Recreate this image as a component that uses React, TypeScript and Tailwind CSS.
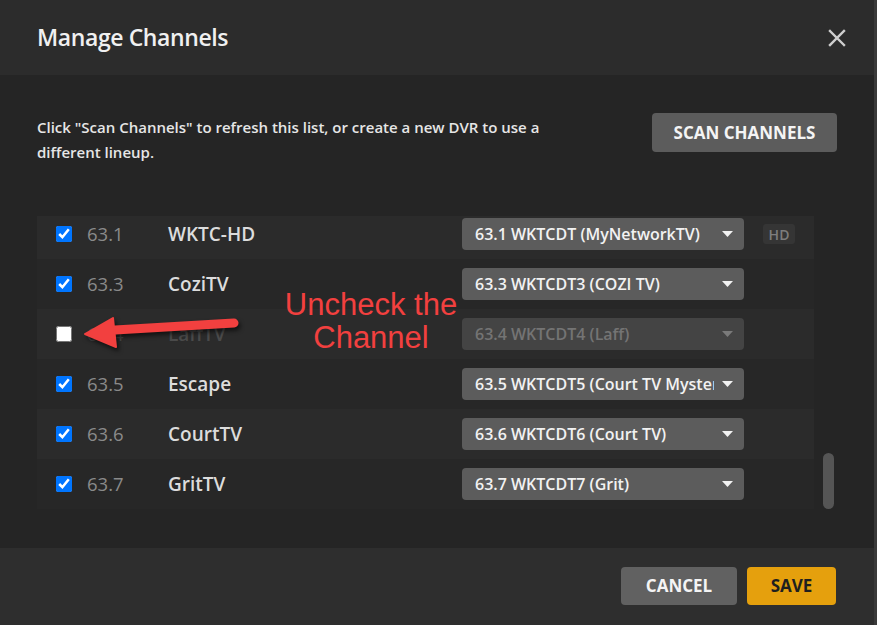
import React from "react";

type Row = { num: string; name: string; sel: string; checked: boolean; hd?: boolean };

const rows: Row[] = [
  { num: "63.1", name: "WKTC-HD", sel: "63.1 WKTCDT (MyNetworkTV)", checked: true, hd: true },
  { num: "63.3", name: "CoziTV", sel: "63.3 WKTCDT3 (COZI TV)", checked: true },
  { num: "63.4", name: "LaffTV", sel: "63.4 WKTCDT4 (Laff)", checked: false },
  { num: "63.5", name: "Escape", sel: "63.5 WKTCDT5 (Court TV Mystery)", checked: true },
  { num: "63.6", name: "CourtTV", sel: "63.6 WKTCDT6 (Court TV)", checked: true },
  { num: "63.7", name: "GritTV", sel: "63.7 WKTCDT7 (Grit)", checked: true },
];

function Caret({ dim }: { dim?: boolean }) {
  return (
    <svg width="11" height="6" viewBox="0 0 11 6" className="shrink-0">
      <path d="M0 0 L11 0 L5.5 6 Z" fill={dim ? "#7a7a7a" : "#f2f2f2"} />
    </svg>
  );
}

export default function App() {
  const font = { fontFamily: '"Open Sans", "Noto Sans", sans-serif' };
  return (
    <div className="flex w-[877px] h-[625px] overflow-hidden" style={font}>
      <div className="relative flex flex-col w-[874px] h-full bg-[#252525]">
        {/* Header */}
        <div className="flex items-center justify-between h-[75px] shrink-0 bg-[#2c2c2c] pl-[37px] pr-[28px]">
          <h1 className="text-[23px] font-semibold text-[#f0f0f0] tracking-[-0.4px] leading-none -mt-[1px]">
            Manage Channels
          </h1>
          <svg width="18" height="18" viewBox="0 0 18 18" className="mt-[1px]">
            <path d="M2 2 L16 16 M16 2 L2 16" stroke="#cfcfcf" strokeWidth="2.4" strokeLinecap="square" />
          </svg>
        </div>

        {/* Body */}
        <div className="flex flex-col flex-1 px-[37px] pt-[38px]">
          <div className="flex items-start justify-between h-[39px]">
            <p className="w-[515px] pt-[2px] text-[15px] font-semibold leading-[25px] text-[#e6e6e6]">
              Click "Scan Channels" to refresh this list, or create a new DVR to use a different lineup.
            </p>
            <button className="h-[39px] w-[185px] rounded-[4px] bg-[#5c5c5c] text-[17px] font-bold text-[#f4f4f4]">
              SCAN CHANNELS
            </button>
          </div>

          <div className="flex mt-[64px] h-[293px]">
            <div className="w-[777px] h-full overflow-hidden">
              <div className="-mt-[7px]">
                {rows.map((r, i) => {
                  const dim = !r.checked;
                  return (
                    <div
                      key={r.num}
                      className={`flex items-center h-[50px] ${i % 2 === 0 ? "bg-[#2b2b2b]" : "bg-[#272727]"}`}
                    >
                      <div className="w-[50px] pl-[19px] flex items-center">
                        <input
                          type="checkbox"
                          defaultChecked={r.checked}
                          className="w-4 h-4 m-0 accent-[#0075ff]"
                        />
                      </div>
                      <div className={`w-[81px] text-[18.5px] ${dim ? "text-[#4a4a4a]" : "text-[#8a8a8a]"}`}>{r.num}</div>
                      <div className={`w-[294px] text-[19px] font-semibold ${dim ? "text-[#4a4a4a]" : "text-[#dcdcdc]"}`}>
                        {r.name}
                      </div>
                      <div
                        className={`flex items-center justify-between w-[282px] h-[32px] rounded-[4px] pl-[13px] pr-[11px] ${
                          dim ? "bg-[#444444]" : "bg-[#5c5c5c]"
                        }`}
                      >
                        <span
                          className={`whitespace-nowrap overflow-hidden w-[239px] text-[16px] font-semibold ${
                            dim ? "text-[#747474]" : "text-[#f2f2f2]"
                          }`}
                        >
                          {r.sel}
                        </span>
                        <Caret dim={dim} />
                      </div>
                      {r.hd && (
                        <div className="ml-[19px] flex items-center justify-center w-[32px] h-[20px] rounded-[3px] bg-[#353535] text-[14px] font-semibold text-[#7d7d7d]">
                          HD
                        </div>
                      )}
                    </div>
                  );
                })}
              </div>
            </div>
            <div className="ml-[9px] w-[11px] h-full relative">
              <div className="absolute bottom-0 left-0 w-[11px] h-[56px] rounded-full bg-[#555555]" />
            </div>
          </div>
        </div>

        {/* Footer */}
        <div className="flex items-center justify-end gap-[10px] h-[77px] shrink-0 bg-[#2e2e2e] pr-[38px] pb-[1px]">
          <button className="h-[38px] w-[116px] rounded-[4px] bg-[#616161] text-[17px] font-bold text-[#f4f4f4]">
            CANCEL
          </button>
          <button className="h-[38px] w-[89px] rounded-[4px] bg-[#e5a00d] text-[17px] font-bold text-[#1f1f1f]">
            SAVE
          </button>
        </div>

        {/* Annotation */}
        <div
          className="absolute left-[269px] top-[288px] w-[204px] text-center text-[31px] leading-[33px] text-[#f2403f]"
          style={{ fontFamily: '"Liberation Sans", Arial, sans-serif' }}
        >
          Uncheck the
          <br />
          Channel
        </div>
        <svg
          className="absolute left-[79px] top-[312px]"
          width="165"
          height="42"
          viewBox="0 0 165 42"
          style={{ filter: "drop-shadow(2px 3px 2px rgba(0,0,0,0.6))" }}
        >
          <path d="M155 11 L36 18" stroke="#f2403f" strokeWidth="9" strokeLinecap="round" />
          <path d="M6 22 L34 6 L37 35 Z" fill="#f2403f" stroke="#f2403f" strokeWidth="2" strokeLinejoin="round" />
        </svg>
      </div>
      <div className="w-[3px] h-full bg-[#3a3a3a]" />
    </div>
  );
}
